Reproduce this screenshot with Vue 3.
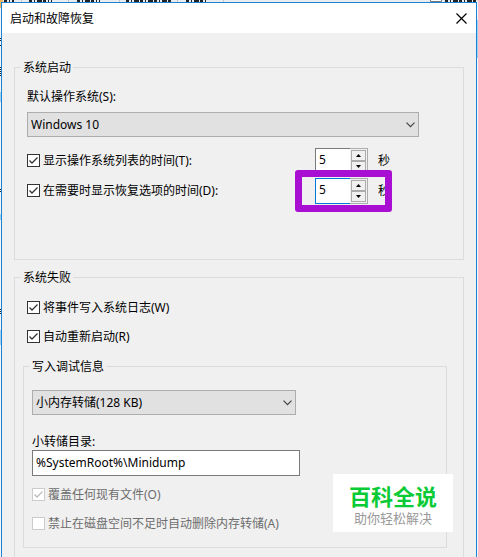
<script setup>
import { ref } from "vue";

let defaultSystem = ref("Windows 10");
let dumpType = ref("小内存转储(128 KB)");
let dumpPath = ref("%SystemRoot%\\Minidump");

let timers = ref([
  { id: "list-time", label: "显示操作系统列表的时间(T):", on: true, seconds: 5 },
  { id: "recovery-time", label: "在需要时显示恢复选项的时间(D):", on: true, seconds: 5, active: true },
]);

let failureOptions = ref([
  { id: "log-event", label: "将事件写入系统日志(W)", on: true },
  { id: "auto-restart", label: "自动重新启动(R)", on: true },
]);

let dumpOptions = ref([
  { id: "overwrite", label: "覆盖任何现有文件(O)", on: true },
  { id: "keep-dump", label: "禁止在磁盘空间不足时自动删除内存转储(A)", on: false },
]);

function step(timer, amount) {
  timer.seconds = Math.max(0, Number(timer.seconds) + amount);
}
</script>

<template>
  <div class="screen">
    <svg class="behind" width="478" height="557" aria-hidden="true">
      <rect width="478" height="2" fill="#ececec" />
      <path d="M0 1H3" stroke="#e8b860" stroke-width="2" />
      <path d="M21.5 0V2M68.5 0V2M119.5 0V2M177.5 0V2M223.5 0V2" stroke="#c8c8c8" />
      <path d="M4 1H14M29 1H52M77 1H100M126 1H172M186 1H207M445 1H476" stroke="#222" stroke-width="2" stroke-dasharray="3 2 1 2 5 1" />
      <path d="M430.5 0V1.5H441.5V0" fill="#fff" stroke="#777" />
      <path d="M.5 2V8" stroke="#e8b860" />
      <path d="M.5 38V41M.5 45V47M.5 67V76M.5 189V192M.5 309V314" stroke="#222" stroke-dasharray="1 1" />
      <path d="M.5 92V102M.5 214V220M.5 330V345M477.5 20V58" stroke="#9fd0f0" />
    </svg>
    <main class="dialog">
      <header class="titlebar">
        <h1>启动和故障恢复</h1>
        <button type="button" class="close" aria-label="关闭">
          <svg width="11" height="11" viewBox="0 0 11 11">
            <path d="M.5 .5L10.5 10.5M10.5 .5L.5 10.5" stroke="#000" stroke-width="1.2" />
          </svg>
        </button>
      </header>

      <form class="body" @submit.prevent>
        <fieldset class="startup">
          <legend>系统启动</legend>
          <div class="group">
            <label class="caption" for="default-system">默认操作系统(S):</label>
            <div class="dropdown system-dropdown">
              <select id="default-system" v-model="defaultSystem">
                <option>Windows 10</option>
              </select>
              <svg class="arrow" width="9" height="6" viewBox="0 0 9 6">
                <path d="M.5 .7L4.5 4.7L8.5 .7" fill="none" stroke="#444" stroke-width="1.2" />
              </svg>
            </div>
            <div v-for="timer in timers" :key="timer.id" class="timer">
              <div class="option">
                <span class="tick">
                  <input type="checkbox" :id="timer.id" v-model="timer.on" />
                  <svg v-if="timer.on" width="13" height="13" viewBox="0 0 13 13">
                    <path d="M2.5 6.5L5 9L10.5 3.5" fill="none" stroke="#333" stroke-width="1.3" />
                  </svg>
                </span>
                <label :for="timer.id">{{ timer.label }}</label>
              </div>
              <div class="spinner" :class="{ active: timer.active }">
                <input type="text" :id="timer.id + '-value'" v-model="timer.seconds" />
                <div class="steps">
                  <button type="button" aria-label="增加" @click="step(timer, 1)">
                    <svg width="5" height="3" viewBox="0 0 5 3"><path d="M0 3L2.5 0L5 3Z" /></svg>
                  </button>
                  <button type="button" aria-label="减少" @click="step(timer, -1)">
                    <svg width="5" height="3" viewBox="0 0 5 3"><path d="M0 0L2.5 3L5 0Z" /></svg>
                  </button>
                </div>
                <span v-if="timer.active" class="marker"></span>
              </div>
              <label class="unit" :for="timer.id + '-value'">秒</label>
            </div>
          </div>
        </fieldset>

        <fieldset class="failure">
          <legend>系统失败</legend>
          <div class="group options">
            <div v-for="option in failureOptions" :key="option.id" class="option">
              <span class="tick">
                <input type="checkbox" :id="option.id" v-model="option.on" />
                <svg v-if="option.on" width="13" height="13" viewBox="0 0 13 13">
                  <path d="M2.5 6.5L5 9L10.5 3.5" fill="none" stroke="#333" stroke-width="1.3" />
                </svg>
              </span>
              <label :for="option.id">{{ option.label }}</label>
            </div>
          </div>

          <fieldset class="debug">
            <legend>写入调试信息</legend>
            <div class="debug-group">
              <div class="dropdown dump-dropdown">
                <select v-model="dumpType" aria-label="写入调试信息">
                  <option>小内存转储(128 KB)</option>
                </select>
                <svg class="arrow" width="9" height="6" viewBox="0 0 9 6">
                  <path d="M.5 .7L4.5 4.7L8.5 .7" fill="none" stroke="#444" stroke-width="1.2" />
                </svg>
              </div>
              <label class="caption path-caption" for="dump-path">小转储目录:</label>
              <input type="text" id="dump-path" class="path" v-model="dumpPath" />
              <div class="dump-options">
                <div v-for="option in dumpOptions" :key="option.id" class="option disabled">
                  <span class="tick">
                    <input type="checkbox" :id="option.id" v-model="option.on" disabled />
                    <svg v-if="option.on" width="13" height="13" viewBox="0 0 13 13">
                      <path d="M2.5 6.5L5 9L10.5 3.5" fill="none" stroke="#bbb" stroke-width="1.3" />
                    </svg>
                  </span>
                  <label :for="option.id">{{ option.label }}</label>
                </div>
              </div>
            </div>
          </fieldset>
        </fieldset>
      </form>
    </main>

    <aside class="stamp">
      <strong>百科全说</strong>
      <span>助你轻松解决</span>
    </aside>
  </div>
</template>

<style>
body {
  margin: 0;
  background: #f4f4f4;
}
</style>

<style scoped>
* {
  box-sizing: border-box;
}

.screen {
  position: relative;
  display: flex;
  flex-direction: column;
  min-height: 100vh;
  padding: 2px 1px 0;
  overflow: hidden;
  color: #000;
  font-family: "Noto Sans", "Noto Sans CJK SC", sans-serif;
  font-size: 12px;
  line-height: 17px;
}

input, select, button {
  margin: 0;
  color: inherit;
  font: inherit;
  border-radius: 0;
  outline: none;
}

.behind {
  position: absolute;
  top: 0;
  left: 0;
}

.dialog {
  position: relative;
  flex: 1;
  display: flex;
  flex-direction: column;
  border: 1px solid #1883d7;
  border-bottom: 0;
  background: #f0f0f0;
}

.titlebar {
  display: flex;
  align-items: center;
  justify-content: space-between;
  height: 30px;
  padding: 0 9px 0 8px;
  background: #fff;
}

h1 {
  margin: 0;
  font-size: 12px;
  font-weight: 400;
}

.close {
  display: flex;
  padding: 0;
  border: 0;
  background: none;
}

.body {
  flex: 1;
  display: flex;
  flex-direction: column;
  gap: 9px;
  padding: 26px 12px 0;
}

fieldset {
  min-width: 0;
  margin: 0;
  padding: 0 6px;
  border: 1px solid #dcdcdc;
}

legend {
  padding: 0 2px;
}

.group {
  padding: 0 6px;
}

.startup {
  padding-bottom: 55px;
}

.caption {
  display: block;
  margin-top: 12px;
}

.dropdown {
  position: relative;
  height: 25px;
}

.dropdown select {
  display: block;
  width: 100%;
  height: 100%;
  padding: 0 3px;
  appearance: none;
  border: 1px solid #adadad;
  background: #e1e1e1;
}

.arrow {
  position: absolute;
  top: 10px;
  right: 4px;
  pointer-events: none;
}

.system-dropdown {
  width: calc(100% - 32px);
  margin: 7px 0 11px;
}

.timer {
  display: flex;
  align-items: flex-start;
}

.timer + .timer {
  margin-top: 4px;
}

.timer .option {
  width: 288px;
  margin-top: 4px;
}

.option {
  display: flex;
  align-items: center;
  gap: 3px;
}

.tick {
  display: grid;
}

.tick > * {
  grid-area: 1 / 1;
}

.tick svg {
  pointer-events: none;
}

.tick input {
  width: 13px;
  height: 13px;
  appearance: none;
  border: 1px solid #333;
  background: #fff;
}

.spinner {
  position: relative;
  display: flex;
  width: 53px;
  height: 26px;
}

.spinner input {
  width: 35px;
  padding: 0 3px 4px;
  border: 1px solid #7a7a7a;
  border-right: 0;
  background: #fff;
}

.spinner.active input {
  border-color: #0078d7;
}

.steps {
  flex: 1;
  display: flex;
  flex-direction: column;
  padding: 1px;
  border: 1px solid #adadad;
  border-left: 0;
}

.steps button {
  flex: 1;
  display: flex;
  align-items: center;
  justify-content: center;
  padding: 0;
  border: 1px solid #acacac;
  background: #f0f0f0;
}

.marker {
  position: absolute;
  top: -8px;
  right: -24px;
  bottom: -8px;
  left: -20px;
  z-index: 1;
  border: 7px solid #a90fd2;
  border-radius: 3px;
  pointer-events: none;
}

.unit {
  margin: 4px 0 0 10px;
}

.failure {
  flex: 1;
  border-bottom: 0;
}

.options {
  display: grid;
  gap: 12px;
  padding-top: 13px;
}

.debug {
  margin: 13px 10px 0 2px;
  padding-bottom: 15px;
}

.debug-group {
  padding: 15px 2px 0;
}

.dump-dropdown {
  width: 264px;
}

.path-caption {
  margin-top: 18px;
}

.path {
  display: block;
  width: 268px;
  height: 26px;
  padding: 0 3px 2px;
  border: 1px solid #7a7a7a;
  background: #fff;
}

.dump-options {
  display: grid;
  gap: 12px;
  margin-top: 10px;
}

.disabled {
  color: #6d6d6d;
}

.disabled .tick input {
  border-color: #ccc;
}

.stamp {
  position: absolute;
  right: 25px;
  bottom: 25px;
  display: flex;
  flex-direction: column;
  align-items: center;
  width: 120px;
  height: 58px;
  padding-top: 11px;
  background: #fff;
  color: #999;
  font-family: "Liberation Sans", "Noto Sans CJK SC", sans-serif;
  font-size: 13px;
}

.stamp strong {
  color: #0acb35;
  font-size: 22px;
  font-weight: 700;
  line-height: 25px;
}
</style>
